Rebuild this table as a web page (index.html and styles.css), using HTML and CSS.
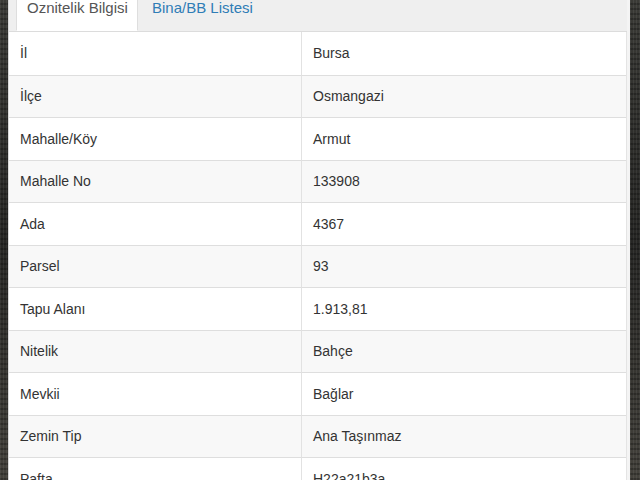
FILE: index.html
```html
<!DOCTYPE html>
<html lang="tr">
<head>
<meta charset="utf-8">
<link rel="stylesheet" href="styles.css">
</head>
<body>
<div class="map">
  <div class="panel">
    <div class="tabs">
      <div class="tab active">Oznitelik Bilgisi</div>
      <div class="tab">Bina/BB Listesi</div>
    </div>
    <div class="grid">
      <div class="row"><div class="cell key">İl</div><div class="cell">Bursa</div></div>
      <div class="row alt"><div class="cell key">İlçe</div><div class="cell">Osmangazi</div></div>
      <div class="row"><div class="cell key">Mahalle/Köy</div><div class="cell">Armut</div></div>
      <div class="row alt"><div class="cell key">Mahalle No</div><div class="cell">133908</div></div>
      <div class="row"><div class="cell key">Ada</div><div class="cell">4367</div></div>
      <div class="row alt"><div class="cell key">Parsel</div><div class="cell">93</div></div>
      <div class="row"><div class="cell key">Tapu Alanı</div><div class="cell">1.913,81</div></div>
      <div class="row alt"><div class="cell key">Nitelik</div><div class="cell">Bahçe</div></div>
      <div class="row"><div class="cell key">Mevkii</div><div class="cell">Bağlar</div></div>
      <div class="row alt"><div class="cell key">Zemin Tip</div><div class="cell">Ana Taşınmaz</div></div>
      <div class="row"><div class="cell key">Pafta</div><div class="cell">H22a21b3a</div></div>
    </div>
  </div>
</div>
</body>
</html>
```
FILE: styles.css
```css
html, body {
  margin: 0;
  padding: 0;
  height: 100%;
  overflow: hidden;
}
body {
  font-family: "Liberation Sans", Arial, sans-serif;
  font-size: 14px;
  color: #333;
}
.map {
  height: 100%;
  background-color: #2e2e2c;
  background-image:
    repeating-linear-gradient(90deg, rgba(255,255,255,0.06) 0 1px, transparent 1px 3px),
    repeating-linear-gradient(0deg, rgba(0,0,0,0.25) 0 2px, transparent 2px 5px),
    linear-gradient(180deg, #3a3a36, #262624 50%, #44423c);
  padding-left: 8px;
  padding-right: 10px;
  box-sizing: border-box;
}
.panel {
  background: #fff;
  height: 100%;
  border-left: 1px solid #d8d8d8;
  border-right: 3px solid #f4f4f4;
  box-sizing: border-box;
  overflow: hidden;
}
.tabs {
  display: flex;
  height: 31px;
  background: #efefef;
  border-bottom: 1px solid #dcdcdc;
  padding-left: 7px;
  align-items: flex-start;
}
.tab {
  padding: 0 14px 0 13px;
  height: 32px;
  font-size: 15px;
  line-height: 15px;
  margin-top: -1px;
  color: #2f7db6;
  box-sizing: border-box;
  border: 1px solid transparent;
  white-space: nowrap;
}
.tab.active {
  background: #fff;
  color: #555;
  border-color: #dedede;
  border-bottom-color: #fff;
  width: 122px;
  padding-left: 10px;
}
.grid {
  display: grid;
  grid-auto-rows: 42.5px;
  border-right: 1px solid #e4e4e4;
}
.row {
  display: grid;
  grid-template-columns: 293px 1fr;
}
.row + .row .cell {
  border-top: 1px solid #dedede;
}
.row.alt {
  background: #f8f8f8;
}
.cell {
  display: flex;
  align-items: center;
  padding-left: 11px;
}
.cell.key {
  border-right: 1px solid #e2e2e2;
}
```
